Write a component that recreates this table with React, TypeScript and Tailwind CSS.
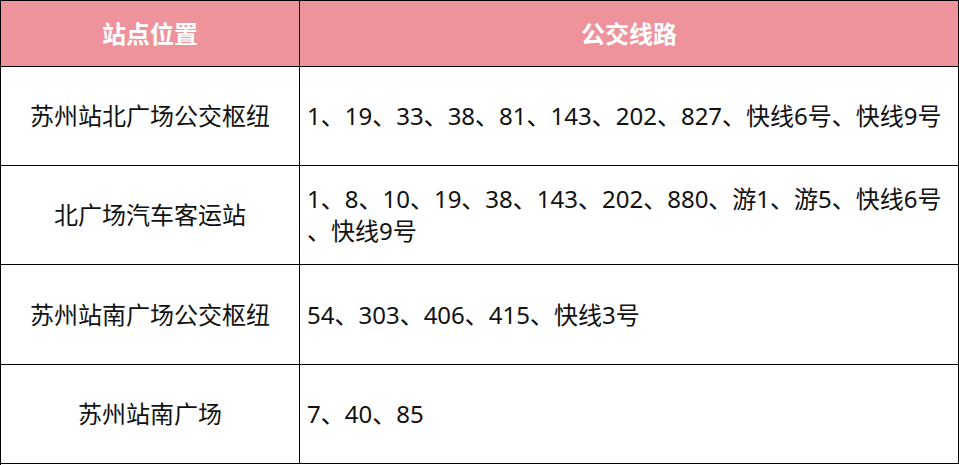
import React from "react";

const rows: { name: string; lines: string[]; h: string }[] = [
  { name: "苏州站北广场公交枢纽", lines: ["1、19、33、38、81、143、202、827、快线6号、快线9号"], h: "h-[99px]" },
  { name: "北广场汽车客运站", lines: ["1、8、10、19、38、143、202、880、游1、游5、快线6号", "、快线9号"], h: "h-[99px]" },
  { name: "苏州站南广场公交枢纽", lines: ["54、303、406、415、快线3号"], h: "h-[100px]" },
  { name: "苏州站南广场", lines: ["7、40、85"], h: "h-[99px]" },
];

export default function App() {
  return (
    <div
      className="w-[959px] h-[465px] bg-white text-[24px] text-[#111] border-l border-t border-black"
      style={{ fontFamily: '"Noto Sans", "Noto Sans CJK SC", sans-serif' }}
    >
      <div className="flex h-[66px] bg-[#ee939c] text-white font-bold">
        <div className="w-[299px] shrink-0 flex items-center justify-center border-r border-b border-black">站点位置</div>
        <div className="w-[659px] shrink-0 flex items-center justify-center border-r border-b border-black">公交线路</div>
      </div>
      {rows.map((r) => (
        <div key={r.name} className={`flex ${r.h}`}>
          <div className="w-[299px] shrink-0 flex items-center justify-center border-r border-b border-black">{r.name}</div>
          <div className="w-[659px] shrink-0 flex flex-col justify-center pl-[7px] border-r border-b border-black leading-[32px]">
            {r.lines.map((l, i) => (
              <div key={i} className="whitespace-nowrap">{l}</div>
            ))}
          </div>
        </div>
      ))}
    </div>
  );
}
